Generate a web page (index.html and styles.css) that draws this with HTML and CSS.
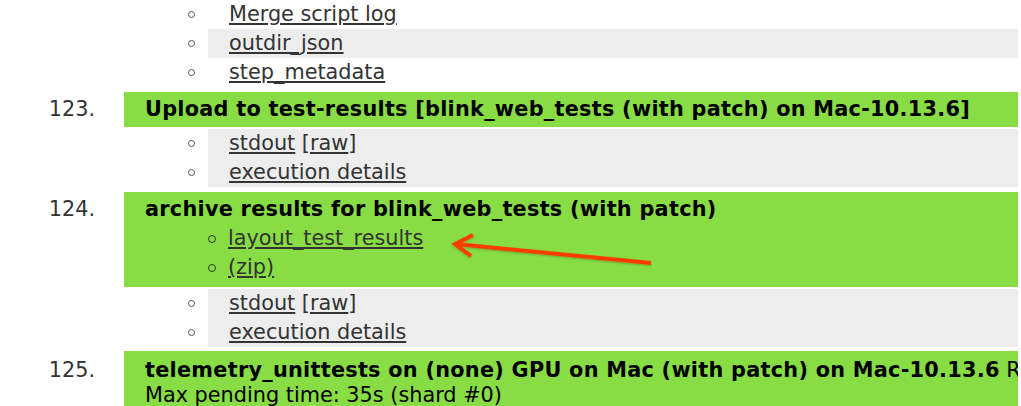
FILE: index.html
```html
<!DOCTYPE html>
<html>
<head>
<meta charset="utf-8">
<link rel="stylesheet" href="styles.css">
</head>
<body>
<div class="page">
  <div class="step">
    <div class="num"></div>
    <div class="body">
      <ul class="logs">
        <li class="row"><span class="bullet"></span><span class="cell"><a href="#">Merge script log</a></span></li>
        <li class="row alt"><span class="bullet"></span><span class="cell"><a href="#">outdir_json</a></span></li>
        <li class="row"><span class="bullet"></span><span class="cell"><a href="#">step_metadata</a></span></li>
      </ul>
    </div>
  </div>

  <div class="step">
    <div class="num">123.</div>
    <div class="body">
      <div class="result"><b>Upload to test-results [blink_web_tests (with patch) on Mac-10.13.6]</b></div>
      <ul class="logs">
        <li class="row alt"><span class="bullet"></span><span class="cell"><a href="#">stdout</a> [<a href="#">raw</a>]</span></li>
        <li class="row alt"><span class="bullet"></span><span class="cell"><a href="#">execution details</a></span></li>
      </ul>
    </div>
  </div>

  <div class="step">
    <div class="num">124.</div>
    <div class="body">
      <div class="result">
        <b>archive results for blink_web_tests (with patch)</b>
        <ul class="sublinks">
          <li><span class="bullet"></span><a href="#">layout_test_results</a></li>
          <li><span class="bullet"></span><a href="#">(zip)</a></li>
        </ul>
      </div>
      <ul class="logs">
        <li class="row alt"><span class="bullet"></span><span class="cell"><a href="#">stdout</a> [<a href="#">raw</a>]</span></li>
        <li class="row alt"><span class="bullet"></span><span class="cell"><a href="#">execution details</a></span></li>
      </ul>
    </div>
  </div>

  <div class="step last">
    <div class="num">125.</div>
    <div class="body">
      <div class="result">
        <div class="line"><b>telemetry_unittests on (none) GPU on Mac (with patch) on Mac-10.13.6</b> R</div>
        <div class="line">Max pending time: 35s (shard #0)</div>
      </div>
    </div>
  </div>

  <svg class="arrow" width="220" height="40" viewBox="0 0 220 40">
    <defs>
      <filter id="sh" x="-10%" y="-50%" width="120%" height="200%">
        <feDropShadow dx="0" dy="1" stdDeviation="1" flood-color="#000" flood-opacity="0.25"/>
      </filter>
    </defs>
    <g filter="url(#sh)" stroke="#ff3d00" stroke-width="4" fill="none" stroke-linecap="butt" stroke-linejoin="miter">
      <path d="M212 33 L17 14"/>
      <path d="M34 5 L16 14 L32 26"/>
    </g>
  </svg>
</div>
</body>
</html>
```

FILE: styles.css
```css
html, body {
  margin: 0;
  padding: 0;
  background: #fff;
}

.page {
  position: relative;
  width: 1018px;
  overflow: hidden;
  height: 406px;
  font-family: "DejaVu Sans", Verdana, sans-serif;
  font-size: 20.8px;
  line-height: 29px;
  color: #333;
}

.step {
  display: grid;
  grid-template-columns: 124px 1fr;
  margin-bottom: 5px;
}

.step.last {
  margin-top: -1px;
}

.num {
  text-align: right;
  padding: 5px 29px 0 0;
  line-height: 25px;
  color: #333;
}

.step.last .num {
  padding-top: 7px;
}

.body {
  min-width: 0;
}

.result {
  background: #88dd44;
  padding: 5px 0 5px 21px;
  line-height: 25px;
  color: #000;
  white-space: nowrap;
  overflow: hidden;
}

.step.last .result {
  padding-top: 7px;
}

.result b {
  font-weight: bold;
  letter-spacing: 0.27px;
}

.logs {
  list-style: none;
  margin: 2px 0 0;
  padding: 0;
}

.step:first-child .logs {
  margin-top: 0;
}

.row {
  display: grid;
  grid-template-columns: 84px 1fr;
  align-items: center;
  height: 29px;
}

.row .bullet {
  justify-self: end;
  margin-right: 13px;
}

.bullet {
  display: inline-block;
  width: 5px;
  height: 5px;
  border: 1.4px solid #555;
  border-radius: 50%;
}

.cell {
  padding-left: 21px;
  line-height: 29px;
  color: #333;
}

.row.alt .cell {
  background: #ededed;
}

a {
  color: #333;
  text-decoration: underline;
}

.sublinks {
  list-style: none;
  margin: 0;
  padding: 2px 0 0 63px;
}

.sublinks li {
  display: flex;
  align-items: center;
  gap: 12px;
  height: 29px;
}

.sublinks .bullet {
  width: 6px;
  height: 6px;
  border-width: 1.5px;
  border-color: #2a3a1a;
}

.sublinks a {
  color: #333;
}

.line {
  white-space: nowrap;
}

.arrow {
  position: absolute;
  left: 439px;
  top: 230px;
}
```
